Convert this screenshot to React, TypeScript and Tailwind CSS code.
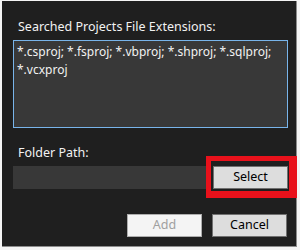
const App = () => {
  return (
    <div className="h-[250px] w-[300px] bg-[#f4f4f4] pl-[2px] pt-[1px] font-['Noto_Sans',sans-serif] text-[12.5px]">
      <div className="relative flex h-[246px] w-[295px] flex-col border-r border-b border-[#8c8c8c] bg-[#1f1f1f] pt-[18px] pr-[8px] pl-[11px]">
        <div className="pl-[5px] leading-[16px] text-[#f2f2f2]">Searched Projects File Extensions:</div>
        <div className="mt-[5px] h-[88px] w-[275px] border border-[#78b4ea] bg-[#383838] pl-[3px] pt-[2px] text-[12px] leading-[18px] text-[#f2f2f2]">
          *.csproj; *.fsproj; *.vbproj; *.shproj; *.sqlproj; *.vcxproj
        </div>

        <div className="mt-[17px] pl-[5px] leading-[16px] text-[#f2f2f2]">Folder Path:</div>
        <div className="mt-[5px] flex gap-[7px]">
          <div className="h-[23px] w-[193px] bg-[#383838]" />
          <button className="h-[23px] w-[75px] border border-[#707070] bg-[#dddddd] text-black">Select</button>
        </div>

        <div className="mt-[25px] flex justify-end gap-[10px] pr-[1px]">
          <button className="h-[23px] w-[75px] border border-[#adadad] bg-[#f4f4f4] text-[#a0a0a0]">Add</button>
          <button className="h-[23px] w-[75px] border border-[#707070] bg-[#dddddd] text-black">Cancel</button>
        </div>

        {/* annotation highlight around Select */}
        <div className="absolute top-[155px] left-[204px] h-[42px] w-[91px] border-[5px] border-r-[8px] border-b-[7px] border-[#e8111b]" />
      </div>
    </div>
  );
};

export default App;
